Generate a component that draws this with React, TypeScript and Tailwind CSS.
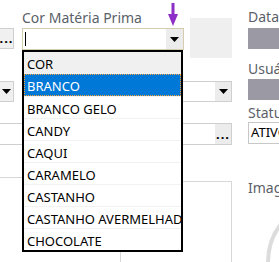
const items = [
  'COR',
  'BRANCO',
  'BRANCO GELO',
  'CANDY',
  'CAQUI',
  'CARAMELO',
  'CASTANHO',
  'CASTANHO AVERMELHADO',
  'CHOCOLATE',
]

function DropArrow() {
  return (
    <svg width="9" height="5" viewBox="0 0 9 5">
      <path d="M0 0h9L4.5 5z" fill="#000" />
    </svg>
  )
}

export default function App() {
  return (
    <div
      className="relative w-[279px] h-[262px] overflow-hidden bg-white text-[13px] leading-none text-black"
      style={{ fontFamily: '"Noto Sans", "Open Sans", sans-serif' }}
    >
      <div className="flex">
        {/* left + middle area */}
        <div className="flex flex-col w-[232px] shrink-0">
          <div className="flex">
            <div className="mt-[28px] w-[14px] h-[21px] flex items-center justify-center bg-[#f0f0f0] border border-[#cfcfcf] border-l-0 font-bold tracking-[1px]">
              ...
            </div>
            <div className="ml-[8px] flex flex-col w-[162px]">
              <div className="h-[28px] pt-[11px] text-[#5b5f69] text-[14px]">Cor Matéria Prima</div>
              <div className="h-[22px] flex border border-[#d4cdb0]">
                <div className="ml-[2px] mt-[3px] w-px h-[14px] bg-black" />
                <div className="ml-auto w-[17px] bg-[#ececec] flex items-center justify-center">
                  <DropArrow />
                </div>
              </div>
            </div>
            <div className="ml-[6px] mt-[18px] w-[42px] h-[40px] bg-[#efefef]" />
          </div>
          <div className="mt-[23px] flex">
            <div className="w-[14px] h-[21px] flex items-center justify-center bg-[#f0f0f0] border border-[#cfcfcf] border-l-0">
              <DropArrow />
            </div>
            <div className="ml-[8px] flex-1 h-[21px] flex border border-[#cfcfcf]">
              <div className="ml-auto w-[16px] bg-[#ececec] flex items-center justify-center">
                <DropArrow />
              </div>
            </div>
          </div>
          <div className="mt-[21px] -ml-px h-[22px] flex border border-[#cfcfcf]">
            <div className="ml-auto w-[16px] bg-[#ececec] flex items-center justify-center font-bold tracking-[1px]">
              ...
            </div>
          </div>
          <div className="mt-[32px] w-[22px] h-px bg-[#d8d8d8]" />
          <div className="mt-[3px] ml-[120px] h-[90px] border border-[#d8d8d8]" />
        </div>

        {/* right column */}
        <div className="ml-[16px] flex flex-col text-[14px] text-[#5b5f69]">
          <div className="h-[28px] pt-[10px]">Data</div>
          <div className="w-[40px] h-[21px] bg-[#9b99a3]" />
          <div className="h-[30px] pt-[13px]">Usuário</div>
          <div className="w-[40px] h-[21px] bg-[#9b99a3]" />
          <div className="h-[22px] pt-[6px]">Status</div>
          <div className="w-[40px] h-[22px] border border-[#c8c8c8] pl-[2px] pt-[3px] text-[13px] text-black">ATIVO</div>
          <div className="h-[38px] pt-[37px]">Imagem</div>
          <svg className="mt-[38px]" width="31" height="42" viewBox="0 0 31 42">
            <circle cx="82" cy="42" r="62" fill="none" stroke="#dcdcdc" strokeWidth="4" />
          </svg>
        </div>
      </div>

      {/* arrow hint */}
      <svg className="absolute left-[168px] top-[3px]" width="10" height="23" viewBox="0 0 10 23">
        <rect x="3.5" y="0" width="3" height="13" fill="#8e2fc8" />
        <path d="M0 11h10L5 23z" fill="#8e2fc8" />
      </svg>

      {/* open list */}
      <div className="absolute left-[22px] top-[50px] w-[161px] border-2 border-black bg-white">
        {items.map((it, i) => (
          <div
            key={it}
            className={
              'h-[22px] pl-[3px] pt-[6px] whitespace-nowrap overflow-hidden ' +
              (i === 0
                ? 'bg-[#f0f0f0]'
                : i === 1
                ? 'bg-[#0078d7] text-white outline-1 outline-dotted outline-[#f3a33a] -outline-offset-1'
                : 'border-t border-[#f2f2f2]')
            }
          >
            {it}
          </div>
        ))}
      </div>
    </div>
  )
}
